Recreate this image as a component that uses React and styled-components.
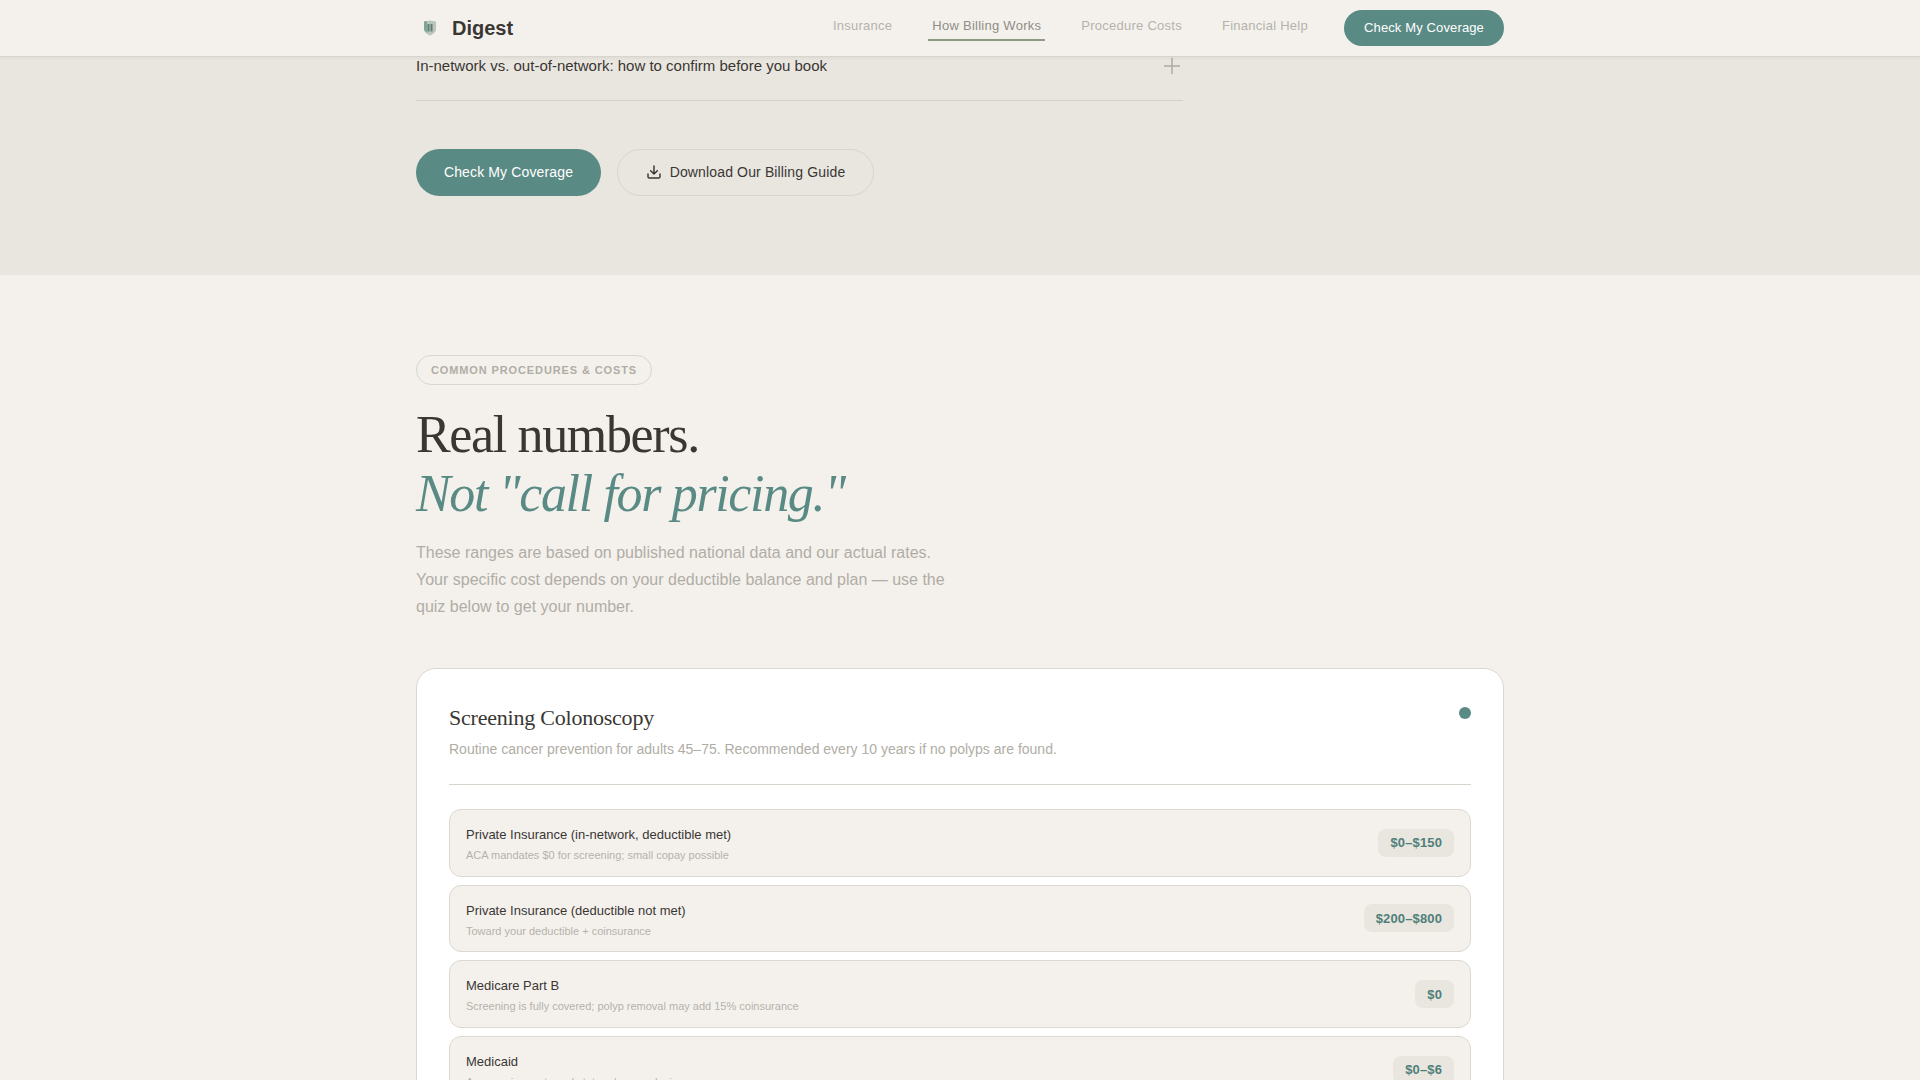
import React from "react";
import styled, { createGlobalStyle } from "styled-components";

const Global = createGlobalStyle`
  html, body { margin: 0; padding: 0; height: 100%; overflow: hidden; background: #f4f1ed; }
  #root { height: 100%; }
  * { box-sizing: border-box; }
`;
const Page = styled.div`
  height: 1080px; overflow: hidden; background: #f4f1ed;
  font-family: "Liberation Sans", Arial, sans-serif; color: #3a3733;
`;
const Nav = styled.header`
  height: 57px; background: #f4f1ed; border-bottom: 1px solid #d8d5ce;
  box-shadow: 0 1px 3px rgba(60,55,45,.08); position: relative; z-index: 2;
  display: flex; justify-content: center;
`;
const NavInner = styled.div`
  width: 1088px; display: flex; align-items: center; justify-content: space-between;
`;
const Brand = styled.div`
  display: flex; align-items: center; gap: 15px; padding-left: 7px;
  font-size: 20px; font-weight: 700; color: #3a3733;
`;
const NavRight = styled.nav`
  display: flex; align-items: center; gap: 32px;
`;
const NavLink = styled.a`
  display: block; padding: 8px 4px 6px; margin-top: -6px;
  font-size: 13px; letter-spacing: .26px; line-height: 15px;
  color: ${p => (p.$active ? "#8f8d86" : "#b5b2aa")};
  border-bottom: 2px solid ${p => (p.$active ? "#8f9a85" : "transparent")};
`;
const NavCta = styled.a`
  height: 36px; width: 160px; border-radius: 18px; background: #5a8a84; color: #fff; padding-bottom: 1px;
  font-size: 13px; letter-spacing: .13px; display: flex; align-items: center; justify-content: center;
`;
const FaqBand = styled.section`
  height: 218px; background: #e9e6e0; display: flex; justify-content: center;
`;
const Wrap = styled.div`
  width: 1088px;
`;
const FaqRow = styled.div`
  width: 767px; height: 44px; padding-bottom: 26px; border-bottom: 1px solid #d3d0c9;
  display: flex; align-items: center; justify-content: space-between;
  font-size: 15px; color: #3a3733;
`;
const Plus = styled.svg`
  width: 18px; height: 18px; margin-right: 2px; stroke: #aeaba3; stroke-width: 1.5; fill: none;
`;
const Actions = styled.div`
  display: flex; gap: 16px; margin-top: 48px;
`;
const PrimaryBtn = styled.a`
  width: 185px; height: 47px; border-radius: 24px; background: #5a8a84; color: #fff; padding-bottom: 1px;
  font-size: 14px; letter-spacing: .14px; display: flex; align-items: center; justify-content: center;
`;
const GhostBtn = styled.a`
  width: 257px; height: 47px; border-radius: 24px; border: 1px solid #d8d5ce; color: #3a3733; padding-bottom: 1px;
  font-size: 14px; letter-spacing: .14px; display: flex; align-items: center; justify-content: center; gap: 8px;
`;
const Main = styled.section`
  display: flex; justify-content: center; padding-top: 80px;
`;
const Badge = styled.div`
  display: inline-flex; align-items: center; height: 30px; padding: 0 14px;
  border: 1px solid #d8d5ce; border-radius: 15px;
  font-size: 11px; font-weight: 700; letter-spacing: .88px; text-transform: uppercase; color: #b0ada5;
`;
const Title = styled.h2`
  margin: 20px 0 0; font-family: "Liberation Serif", "Times New Roman", serif; font-weight: 400;
  font-size: 52px; line-height: 59px; letter-spacing: -1.35px; color: #3a3733;
  em { display: block; font-style: italic; color: #5a8a84; }
`;
const Lead = styled.p`
  margin: 15.6px 0 0; width: 540px; font-size: 16px; line-height: 27.2px; color: #b0ada5;
`;
const Card = styled.article`
  margin-top: 47.8px; background: #fff; border: 1px solid #dcd9d3; border-radius: 20px;
  padding: 32px 32px 0;
`;
const CardHead = styled.div`
  display: flex; justify-content: space-between; align-items: flex-start;
  padding-bottom: 24px; border-bottom: 1px solid #d8d5ce; margin-bottom: 24px;
`;
const CardTitle = styled.h3`
  margin: 4px 0 0; font-family: "Liberation Serif", "Times New Roman", serif; font-weight: 400;
  font-size: 22px; line-height: 26px; letter-spacing: -.22px; color: #3a3733;
`;
const CardDesc = styled.p`
  margin: 7px 0 0; font-size: 14px; line-height: 22px; color: #b0ada5;
`;
const Dot = styled.span`
  width: 12px; height: 12px; margin-top: 6px; border-radius: 50%; background: #5a8a84;
`;
const Rows = styled.div`
  display: flex; flex-direction: column; gap: 8px;
`;
const Row = styled.div`
  height: 67.67px; padding: 0 16px; background: #f4f1ed; border: 1px solid #dcd9d3; border-radius: 12px;
  display: flex; align-items: center; justify-content: space-between;
`;
const RowText = styled.div`
  padding-top: 3.5px;
`;
const RowLabel = styled.div`
  font-size: 13px; line-height: 18px; color: #3a3733;
`;
const RowSub = styled.div`
  margin-top: 3px; font-size: 11px; line-height: 16px; color: #b5b2aa;
`;
const Price = styled.span`
  height: 28px; padding: 0 12px; border-radius: 8px; background: #e9e6e0; color: #4f7f79;
  font-size: 13px; font-weight: 700; letter-spacing: .13px; display: flex; align-items: center;
`;

const rows = [
  ["Private Insurance (in-network, deductible met)", "ACA mandates $0 for screening; small copay possible", "$0–$150"],
  ["Private Insurance (deductible not met)", "Toward your deductible + coinsurance", "$200–$800"],
  ["Medicare Part B", "Screening is fully covered; polyp removal may add 15% coinsurance", "$0"],
  ["Medicaid", "Age requirements and state rules vary by insurer", "$0–$6"],
];

export default function App() {
  return (
    <Page>
      <Global />
      <Nav>
        <NavInner>
          <Brand>
            <svg width="14" height="16" viewBox="0 0 14 16">
              <path d="M1 1.5 7 .5l6 1V9c0 3-3 5.5-6 6.5C4 14.5 1 12 1 9Z" fill="#b9c7b8" />
              <path d="M1 1.5 4 1v11.8C2 11.500 1 10 1 9Z" fill="#7fa59b" />
              <path d="M4.500 4h2v7.500h-2zM7.500 4h2v7.500h-2z" fill="#5f7f72" />
            </svg>
            Digest
          </Brand>
          <NavRight>
            <NavLink>Insurance</NavLink>
            <NavLink $active>How Billing Works</NavLink>
            <NavLink>Procedure Costs</NavLink>
            <NavLink>Financial Help</NavLink>
            <NavCta>Check My Coverage</NavCta>
          </NavRight>
        </NavInner>
      </Nav>
      <FaqBand>
        <Wrap>
          <FaqRow>
            In-network vs. out-of-network: how to confirm before you book
            <Plus viewBox="0 0 18 18"><path d="M9 1v16M1 9h16" /></Plus>
          </FaqRow>
          <Actions>
            <PrimaryBtn>Check My Coverage</PrimaryBtn>
            <GhostBtn>
              <svg width="16" height="16" viewBox="0 0 24 24" fill="none" stroke="#3a3733" strokeWidth="2.2" strokeLinecap="round" strokeLinejoin="round">
                <path d="M12 3v12M7 10l5 5 5-5M3 15v4a2 2 0 0 0 2 2h14a2 2 0 0 0 2-2v-4" />
              </svg>
              Download Our Billing Guide
            </GhostBtn>
          </Actions>
        </Wrap>
      </FaqBand>
      <Main>
        <Wrap>
          <Badge>Common Procedures &amp; Costs</Badge>
          <Title>Real numbers.<em>Not "call for pricing."</em></Title>
          <Lead>These ranges are based on published national data and our actual rates. Your specific cost depends on your deductible balance and plan — use the quiz below to get your number.</Lead>
          <Card>
            <CardHead>
              <div>
                <CardTitle>Screening Colonoscopy</CardTitle>
                <CardDesc>Routine cancer prevention for adults 45–75. Recommended every 10 years if no polyps are found.</CardDesc>
              </div>
              <Dot />
            </CardHead>
            <Rows>
              {rows.map(([l, s, p]) => (
                <Row key={l}>
                  <RowText>
                    <RowLabel>{l}</RowLabel>
                    <RowSub>{s}</RowSub>
                  </RowText>
                  <Price>{p}</Price>
                </Row>
              ))}
            </Rows>
          </Card>
        </Wrap>
      </Main>
    </Page>
  );
}
